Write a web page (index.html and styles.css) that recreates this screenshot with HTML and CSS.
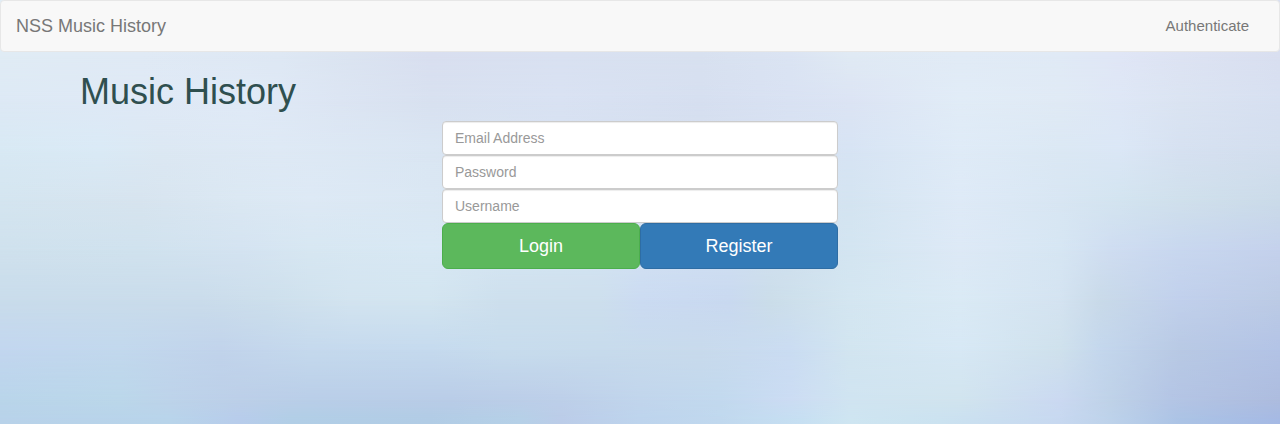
FILE: index.html
```html
<!DOCTYPE html>
<html lang="en">
<head>
<meta charset="utf-8">
<title>NSS Music History</title>
<link rel="stylesheet" href="styles.css">
</head>
<body>
<div class="backdrop" aria-hidden="true">
  <div class="wash wash-1"></div>
  <div class="wash wash-2"></div>
  <div class="wash wash-3"></div>
  <div class="wash wash-4"></div>
  <div class="wash wash-5"></div>
  <div class="wash wash-6"></div>
  <div class="wash wash-7"></div>
  <div class="wash wash-8"></div>
  <div class="wash wash-9"></div>
</div>
<nav class="navbar">
  <a class="brand">NSS Music History</a>
  <a class="nav-link">Authenticate</a>
</nav>
<main class="container">
  <h1 class="title">Music History</h1>
  <form class="auth-form">
    <input class="field" type="email" placeholder="Email Address">
    <input class="field" type="password" placeholder="Password">
    <input class="field" type="text" placeholder="Username">
    <div class="actions">
      <button class="btn btn-login" type="button">Login</button>
      <button class="btn btn-register" type="button">Register</button>
    </div>
  </form>
</main>
</body>
</html>
```
FILE: styles.css
```css
* { box-sizing: border-box; }
html { background: #e0eaf5; }
body {
  margin: 0;
  min-height: 424px;
  font-family: "Liberation Sans", Arial, sans-serif;
  font-size: 14px;
  line-height: 1.42857;
  overflow: hidden;
}

/* Soft sky: each wash fades in over the one above it */
.backdrop { position: absolute; inset: 0; z-index: -1; background: #e0eaf5; }
.wash {
  position: absolute;
  inset: 0;
  -webkit-mask-image: linear-gradient(transparent var(--from), #000 var(--to));
  mask-image: linear-gradient(transparent var(--from), #000 var(--to));
}
.wash-1 { --from: -2px; --to: -1px; background: linear-gradient(90deg, #e0ecf5 0, #e0eaf5 140px, #dee8f4 280px, #dbe4f1 350px, #d9dff0 430px, #d9e1f1 560px, #d8e1f0 700px, #dbe4f3 790px, #e0eaf4 850px, #e1ebf6 960px, #e0eaf6 1060px, #e0e6f6 1120px, #dde3f3 1180px, #d9dff0 1280px); }
.wash-2 { --from: 55px; --to: 100px; background: linear-gradient(90deg, #dde9f5 0, #dfe9f6 140px, #e0eaf7 250px, #dce5f3 340px, #d8e1f0 430px, #d9e2f3 560px, #d6dff0 700px, #d9e2f3 790px, #dce4f4 850px, #e1ecf7 960px, #e0eaf5 1060px, #dee7f6 1120px, #dbe4f2 1180px, #d7e0f1 1280px); }
.wash-3 { --from: 100px; --to: 150px; background: linear-gradient(90deg, #d8e9f4 0, #daeaf6 100px, #dce8f3 160px, #dee9f5 280px, #dae6f3 430px, #d7e2f1 560px, #d6e0f0 700px, #d8e2f2 790px, #d7e4f4 850px, #dfebf7 960px, #dbe8f4 1060px, #dbe7f6 1120px, #d6e1f1 1180px, #d3deee 1280px); }
.wash-4 { --from: 150px; --to: 200px; background: linear-gradient(90deg, #d4e5f0 0, #d7e4ef 140px, #dbe8f3 240px, #dde9f5 310px, #dae7f3 430px, #d7e4f2 560px, #d5e1f0 700px, #d6e3f2 790px, #d4e4f1 850px, #deeaf7 960px, #d8e6f3 1060px, #d3e4f0 1120px, #d0e0ec 1180px, #cbdbe9 1280px); }
.wash-5 { --from: 200px; --to: 250px; background: linear-gradient(90deg, #cfe1ed 0, #d0e2ee 140px, #d4e3f1 240px, #d7e7f2 310px, #d8e8f4 430px, #d5e5f2 560px, #d0dff2 700px, #d0e0ef 790px, #d3e5f1 850px, #dde9f6 960px, #d6e6f3 1060px, #cfddf1 1110px, #c8d7ef 1180px, #c4d1ec 1280px); }
.wash-6 { --from: 250px; --to: 300px; background: linear-gradient(90deg, #c9dceb 0, #cadceb 200px, #cddfec 270px, #d3e4f0 350px, #d3e5f0 430px, #cddfed 500px, #cddfed 600px, #cbdbf2 640px, #c9d9f0 730px, #cbdde9 770px, #d4e6f1 850px, #daeaf5 960px, #d4e3f1 1060px, #c9dae9 1100px, #c1d0ec 1180px, #bccbe5 1280px); }
.wash-7 { --from: 300px; --to: 350px; background: linear-gradient(90deg, #c2d6ef 0, #c2d8ed 120px, #c1d3eb 220px, #c5d9ed 310px, #c5daee 430px, #c7dced 500px, #c7dbec 600px, #c8daec 700px, #cadcf2 790px, #d2e5f0 850px, #d7e8f5 960px, #cfe1ec 1060px, #c4d7ed 1100px, #b8c9e4 1180px, #b3c3e6 1280px); }
.wash-8 { --from: 350px; --to: 400px; background: linear-gradient(90deg, #b9d5ea 0, #bbd7ea 120px, #bdd3ea 170px, #bccfe8 240px, #b9cee8 310px, #b9cce7 450px, #bdcfe9 560px, #c1d5ec 640px, #c2d9ee 720px, #cbdcf3 790px, #d0e4f1 850px, #d1e4ee 960px, #cad9f1 1060px, #bfd2e8 1110px, #b4c5e5 1170px, #adbcde 1280px); }
.wash-9 { --from: 400px; --to: 420px; background: linear-gradient(90deg, #b8d2e9 0, #b8d4ea 170px, #b7cceb 240px, #b1cee6 290px, #b1cce5 430px, #b5d0e7 520px, #bbcce8 560px, #bdd4ed 640px, #c0d8ee 720px, #c6dff2 800px, #cee5f1 850px, #cbe2f0 940px, #c7d8f0 1060px, #bdd2ea 1110px, #abc3e5 1180px, #a5b9e4 1280px); }

.navbar {
  display: flex;
  align-items: center;
  justify-content: space-between;
  height: 52px;
  padding: 0 30px 0 15px;
  border: 1px solid #e7e7e7;
  border-radius: 4px;
  background: #f8f8f8;
  color: #777;
}
.brand { font-size: 18px; line-height: 20px; }
.nav-link { font-size: 15px; line-height: 20px; }

.container { padding: 20px 80px 0; }
.title {
  margin: 0 0 10px;
  height: 39px;
  color: #2f4f4f;
  font-size: 36px;
  font-weight: 500;
  line-height: 1.1;
}
.auth-form { width: 396px; margin: 0 auto; }
.field {
  display: block;
  width: 100%;
  height: 34px;
  padding: 6px 12px;
  border: 1px solid #ccc;
  border-radius: 4px;
  background: #fff;
  box-shadow: inset 0 1px 1px rgba(0, 0, 0, .075);
  font: inherit;
}
.field::placeholder { color: #999; opacity: 1; }
.actions { display: grid; grid-template-columns: 1fr 1fr; }
.btn {
  height: 46px;
  padding: 11px 16px 9px;
  border: 1px solid;
  border-radius: 6px;
  color: #fff;
  font-family: inherit;
  font-size: 18px;
  line-height: 1.33333;
}
.btn-login { background: #5cb85c; border-color: #4cae4c; }
.btn-register { background: #337ab7; border-color: #2e6da4; }
```
